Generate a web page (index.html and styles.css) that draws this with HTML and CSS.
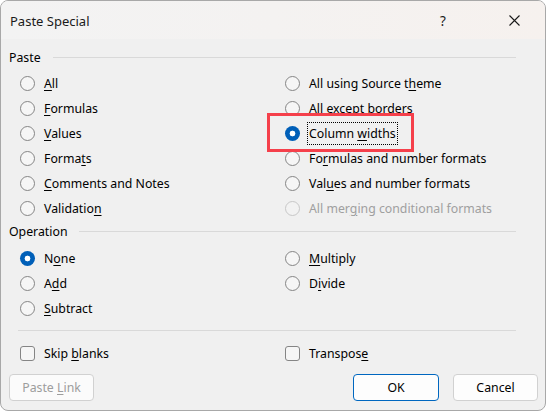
FILE: index.html
```html
<!DOCTYPE html>
<html>
<head>
<meta charset="utf-8">
<link rel="stylesheet" href="styles.css">
</head>
<body>
<div class="dialog">
  <div class="titlebar">
    <span class="title">Paste Special</span>
    <span class="help">?</span>
    <span class="close"><svg width="11" height="11" viewBox="0 0 11 11"><path d="M0.5 0.5 L10.5 10.5 M10.5 0.5 L0.5 10.5" stroke="#1a1a1a" stroke-width="1.1" fill="none"/></svg></span>
  </div>
  <div class="content">
    <div class="group-head"><span>Paste</span><i class="rule"></i></div>
    <div class="options paste-opts">
      <label class="opt"><span class="radio"></span><span><u>A</u>ll</span></label>
      <label class="opt"><span class="radio"></span><span>All using Source t<u>h</u>eme</span></label>
      <label class="opt"><span class="radio"></span><span><u>F</u>ormulas</span></label>
      <label class="opt"><span class="radio"></span><span>All e<u>x</u>cept borders</span></label>
      <label class="opt"><span class="radio"></span><span><u>V</u>alues</span></label>
      <label class="opt"><span class="radio on"></span><span class="focus">Column <u>w</u>idths</span></label>
      <label class="opt"><span class="radio"></span><span>Forma<u>t</u>s</span></label>
      <label class="opt"><span class="radio"></span><span>Fo<u>r</u>mulas and number formats</span></label>
      <label class="opt"><span class="radio"></span><span><u>C</u>omments and Notes</span></label>
      <label class="opt"><span class="radio"></span><span>Val<u>u</u>es and number formats</span></label>
      <label class="opt"><span class="radio"></span><span>Validatio<u>n</u></span></label>
      <label class="opt disabled"><span class="radio"></span><span>All mer<u>g</u>ing conditional formats</span></label>
    </div>
    <div class="group-head op-head"><span>Operation</span><i class="rule"></i></div>
    <div class="options op-opts">
      <label class="opt"><span class="radio on"></span><span>N<u>o</u>ne</span></label>
      <label class="opt"><span class="radio"></span><span><u>M</u>ultiply</span></label>
      <label class="opt"><span class="radio"></span><span>A<u>d</u>d</span></label>
      <label class="opt"><span class="radio"></span><span>D<u>i</u>vide</span></label>
      <label class="opt"><span class="radio"></span><span><u>S</u>ubtract</span></label>
    </div>
    <div class="sep"></div>
    <div class="options checks">
      <label class="opt"><span class="check"></span><span>Skip <u>b</u>lanks</span></label>
      <label class="opt"><span class="check"></span><span>Transpos<u>e</u></span></label>
    </div>
    <div class="footer">
      <button class="btn disabled">Paste <u>L</u>ink</button>
      <span class="spacer"></span>
      <button class="btn default">OK</button>
      <button class="btn">Cancel</button>
    </div>
  </div>
  <div class="highlight"></div>
</div>
</body>
</html>
```

FILE: styles.css
```css
html, body {
  margin: 0;
  padding: 0;
  background: #ffffff;
}
body {
  font-family: "Noto Sans", "Open Sans", sans-serif;
  font-size: 12.3px;
  color: #000;
}
.dialog {
  position: relative;
  box-sizing: border-box;
  width: 546px;
  height: 411px;
  border: 1px solid #a8a8a8;
  border-radius: 8px;
  background: #f0f0f0;
  overflow: hidden;
}
.titlebar {
  height: 38px;
  display: flex;
  align-items: center;
  background: linear-gradient(90deg, #f3f3f3 0%, #f4f2f1 50%, #f6f1ee 100%);
  font-size: 13px;
}
.title {
  margin-left: 9px;
  color: #1a1a1a;
  flex: 1;
  margin-top: 1px;
}
.help {
  width: 20px;
  margin-right: 49px;
  text-align: left;
  font-size: 13.5px;
  color: #1a1a1a;
  margin-top: 1px;
}
.close {
  width: 11px;
  height: 11px;
  margin-right: 25px;
  display: flex;
}
.content {
  display: flex;
  flex-direction: column;
}
.group-head {
  display: flex;
  align-items: center;
  height: 18px;
  margin-top: 9px;
  padding-left: 8px;
  padding-right: 29px;
  gap: 12px;
}
.op-head {
  margin-top: 1px;
}
.rule {
  flex: 1;
  height: 1px;
  background: #d9d9d9;
}
.options {
  display: grid;
  grid-template-columns: 265px 1fr;
  grid-auto-rows: 25px;
  padding-left: 19px;
}
.paste-opts { margin-top: 5px; }
.op-opts { margin-top: 6px; }
.opt {
  display: flex;
  align-items: center;
  gap: 9px;
  white-space: nowrap;
}
.opt u {
  text-decoration-thickness: 1px;
  text-underline-offset: 2px;
}
.radio {
  box-sizing: border-box;
  width: 15px;
  height: 15px;
  border-radius: 50%;
  border: 1px solid #858585;
  background: #f6f6f6;
  flex: none;
}
.radio.on {
  border: none;
  background: radial-gradient(circle, #ffffff 0 2.6px, #005fb8 3.2px);
}
.disabled { color: #9f9f9f; }
.disabled .radio {
  border-color: #c7c7c7;
  background: #f2f2f2;
}
.focus {
  border: 1px dotted #000;
  padding: 2px 1px;
  margin-left: -2px;
}
.sep {
  height: 1px;
  background: #d9d9d9;
  margin: 9px 29px 0 17px;
}
.checks {
  margin-top: 10px;
  padding-left: 19px;
}
.check {
  box-sizing: border-box;
  width: 15px;
  height: 15px;
  border-radius: 3px;
  border: 1px solid #858585;
  background: #f6f6f6;
  flex: none;
}
.footer {
  display: flex;
  align-items: center;
  margin-top: 8px;
  padding: 0 7px 0 8px;
  gap: 14px;
}
.spacer { flex: 1; }
.btn {
  box-sizing: border-box;
  height: 27px;
  width: 85px;
  border: 1px solid #d1d1d1;
  border-radius: 4px;
  background: #fdfdfd;
  font-family: "Noto Sans", "Open Sans", sans-serif;
  font-size: 12.3px;
  color: #000;
  padding: 0;
}
.btn.disabled { color: #9d9d9d; background: #fbfbfb; }
.btn.default { border-color: #0067c0; background: #fdfdfd; width: 86px; }
.btn u { text-underline-offset: 2px; }
.highlight {
  position: absolute;
  left: 266px;
  top: 112px;
  width: 147px;
  height: 39px;
  box-sizing: border-box;
  border: 3px solid #f5404b;
}
```
